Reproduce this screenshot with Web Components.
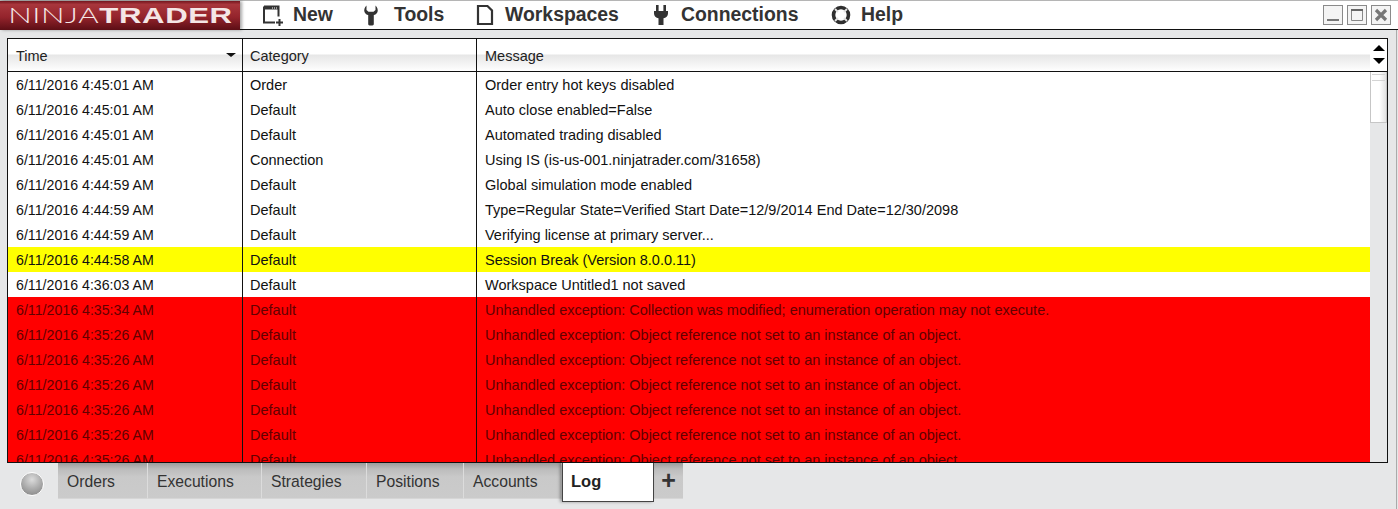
<!DOCTYPE html>
<html>
<head>
<meta charset="utf-8">
<title>NinjaTrader Log</title>
<style>
  html, body { margin: 0; padding: 0; background: #e6e7e8; }
  body { font-family: "Liberation Sans", Arial, sans-serif; overflow: hidden; }
</style>
</head>
<body>
<nt-app></nt-app>
<script>
const ICONS = {
  new: `<svg width="23" height="22" viewBox="0 0 23 22"><path d="M3 2.500h14.500v10M3 2.500v16h11" fill="none" stroke="#333" stroke-width="2"/><path d="M3 3h14v2.500H3z" fill="#333"/><path d="M11 4h1M13 4h1M15 4h1" stroke="#fff"/><path d="M15 18.500h7M18.500 15v7" stroke="#333" stroke-width="2"/></svg>`,
  tools: `<svg width="16" height="22" viewBox="0 0 16 22"><path d="M3.500 1.500C1.500 3.500.8 6 1.500 8c.6 1.600 2 2.700 3.700 3V20c0 1 .8 1.500 2.800 1.500s2.800-.5 2.800-1.500V11c1.700-.3 3.100-1.400 3.700-3 .7-2 0-4.500-2-6.500V6l-2 1.800H5.500L3.500 6z" fill="#333"/></svg>`,
  doc: `<svg width="18" height="22" viewBox="0 0 18 22"><path d="M2 2h9.500L16 6.500V20H2z" fill="none" stroke="#333" stroke-width="2.200"/></svg>`,
  plug: `<svg width="16" height="22" viewBox="0 0 16 22"><path d="M3 1h2.600v6h4.800V1H13v6h2v2.500c0 2.600-2 4.300-4.500 4.800V21h-5v-6.700C3 13.800 1 12.100 1 9.500V7h2z" fill="#333"/></svg>`,
  help: `<svg width="22" height="22" viewBox="0 0 22 22"><circle cx="10" cy="11" r="7.500" fill="none" stroke="#2f2f2f" stroke-width="3.600"/><path d="M4 5l3 3M16 5l-3 3M4 17l3-3M16 17l-3-3" stroke="#e4e4e4" stroke-width="1.800"/></svg>`
};

class NtLogo extends HTMLElement {
  constructor() {
    super();
    this.attachShadow({mode: "open"});
    this.shadowRoot.innerHTML = `
      <style>
        :host {
          display: flex;
          align-items: center;
          justify-content: center;
          width: 240px;
          height: 29px;
          flex: none;
          background: linear-gradient(180deg, #74161e 0%, #a8363c 12%, #95242c 55%, #5c0e15 100%);
          box-shadow: 2px 0 3px rgba(0,0,0,.35);
          overflow: hidden;
        }
        .word {
          display: inline-block;
          white-space: nowrap;
          font-size: 21.500px;
          line-height: 29px;
          transform: scaleX(1.45);
          letter-spacing: .4px;
        }
        .thin { font-family: Lato, "Liberation Sans", sans-serif; font-weight: 300; color: #f6e6e6; }
        .bold { font-family: "Liberation Sans", sans-serif; font-weight: 700; color: #f4e6e6; }
      </style>
      <span class="word"><span class="thin">NINJA</span><span class="bold">TRADER</span></span>`;
  }
}

class NtMenuItem extends HTMLElement {
  constructor() {
    super();
    this.attachShadow({mode: "open"});
  }
  connectedCallback() {
    const gap = this.getAttribute("gap") || "10";
    this.shadowRoot.innerHTML = `
      <style>
        :host {
          display: flex;
          align-items: center;
          font: bold 19.400px "Liberation Sans", Arial, sans-serif;
          color: #333;
          height: 27px;
        }
        .ico { display: flex; margin-right: ${gap}px; }
      </style>
      <span class="ico">${ICONS[this.getAttribute("icon")]}</span><slot></slot>`;
  }
}

class NtWinButton extends HTMLElement {
  constructor() {
    super();
    this.attachShadow({mode: "open"});
  }
  connectedCallback() {
    const kind = this.getAttribute("kind");
    let g = "";
    if (kind === "min") g = `<path d="M3 14h12" stroke="#777" stroke-width="2"/>`;
    if (kind === "max") g = `<path d="M3.500 3.500h11v11h-11z" fill="none" stroke="#888"/><path d="M3 4h12" stroke="#666" stroke-width="2"/>`;
    if (kind === "close") g = `<path d="M4 4l10 10M14 4L4 14" stroke="#777" stroke-width="3.200"/>`;
    this.shadowRoot.innerHTML = `
      <style>
        :host { display: block; width: 18px; height: 18px; border: 1px solid #8a8a8a; background: #f4f4f4; }
        svg { display: block; }
      </style>
      <svg width="18" height="18" viewBox="0 0 18 18">${g}</svg>`;
  }
}

class NtMenubar extends HTMLElement {
  constructor() {
    super();
    this.attachShadow({mode: "open"});
    this.shadowRoot.innerHTML = `
      <style>
        :host {
          display: flex;
          flex: none;
          height: 28px;
          background: #fff;
          border-top: 1px solid #b5b5b5;
          border-bottom: 1px solid #111;
        }
        nt-logo { margin-bottom: -1px; }
        .menu { display: flex; padding-left: 21px; }
        nt-menu-item:nth-of-type(1) { width: 102px; }
        nt-menu-item:nth-of-type(2) { width: 113px; }
        nt-menu-item:nth-of-type(3) { width: 177px; }
        nt-menu-item:nth-of-type(4) { width: 178px; }
        .win { display: flex; gap: 4px; margin-left: auto; padding: 4px 7px 0 0; }
      </style>
      <nt-logo></nt-logo>
      <div class="menu">
        <nt-menu-item icon="new" gap="9">New</nt-menu-item>
        <nt-menu-item icon="tools" gap="15">Tools</nt-menu-item>
        <nt-menu-item icon="doc" gap="11">Workspaces</nt-menu-item>
        <nt-menu-item icon="plug" gap="12">Connections</nt-menu-item>
        <nt-menu-item icon="help" gap="8">Help</nt-menu-item>
      </div>
      <div class="win">
        <nt-win-button kind="min"></nt-win-button>
        <nt-win-button kind="max"></nt-win-button>
        <nt-win-button kind="close"></nt-win-button>
      </div>`;
  }
}

class NtLogRow extends HTMLElement {
  constructor() {
    super();
    this.attachShadow({mode: "open"});
  }
  connectedCallback() {
    this.shadowRoot.innerHTML = `
      <style>
        :host {
          display: grid;
          grid-template-columns: 235px 234px 1fr;
          height: 25px;
          flex: none;
          background: #fff;
          color: #111;
          font: 14.500px/27px "Liberation Sans", Arial, sans-serif;
        }
        :host([level="warn"]) { background: #ffff00; }
        :host([level="error"]) { background: #ff0000; color: #620000; }
        div { white-space: nowrap; overflow: hidden; border-right: 1px solid #111; padding-left: 8px; }
        .time { font-size: 14.200px; }
        .cat { padding-left: 7px; }
        .msg { border-right: 0; }
      </style>
      <div class="time">${this.getAttribute("time")}</div>
      <div class="cat">${this.getAttribute("cat")}</div>
      <div class="msg">${this.getAttribute("msg")}</div>`;
  }
}

class NtGridHeader extends HTMLElement {
  constructor() {
    super();
    this.attachShadow({mode: "open"});
    this.shadowRoot.innerHTML = `
      <style>
        :host {
          display: flex;
          flex: none;
          height: 32px;
          border-bottom: 1px solid #111;
          font: 14.500px "Liberation Sans", Arial, sans-serif;
          color: #222;
        }
        .cols {
          flex: 1;
          display: grid;
          grid-template-columns: 235px 234px 1fr;
          background: linear-gradient(180deg, #fff 0, #fff 15px, #e6e6e6 16px, #fafafa 29px, #fff 32px);
        }
        .cols > div { border-right: 1px solid #111; padding: 9px 0 0 8px; line-height: 17px; position: relative; }
        .cols > .cat { padding-left: 7px; }
        .cols > .msg { border-right: 0; }
        .sort {
          position: absolute;
          right: 6px;
          top: 14px;
          border: 5px solid transparent;
          border-top: 4px solid #111;
          border-bottom: 0;
        }
        .btns {
          width: 17px;
          flex: none;
          background: #fff;
          display: flex;
          flex-direction: column;
          align-items: center;
          padding-top: 6px;
          gap: 7px;
        }
        .up, .down { width: 0; height: 0; border: 6px solid transparent; border-top: 0; border-bottom: 6px solid #000; }
        .down { border-bottom: 0; border-top: 6px solid #000; }
      </style>
      <div class="cols">
        <div>Time<span class="sort"></span></div>
        <div class="cat">Category</div>
        <div class="msg">Message</div>
      </div>
      <div class="btns"><span class="up"></span><span class="down"></span></div>`;
  }
}

class NtScrollbar extends HTMLElement {
  constructor() {
    super();
    this.attachShadow({mode: "open"});
    this.shadowRoot.innerHTML = `
      <style>
        :host { display: block; width: 17px; flex: none; background: #e6e7e8; }
        .thumb {
          height: 51px;
          box-sizing: border-box;
          border: 1px solid #c6c6c6;
          border-top: 0;
          background: linear-gradient(90deg, #fff 0, #fff 55%, #e2e2e2 100%);
          padding: 2px 1px 0;
        }
        i { display: block; height: 1px; background: #d4d4d4; margin-bottom: 5px; }
      </style>
      <div class="thumb"><i></i><i></i></div>`;
  }
}

const E1 = "Unhandled exception: Object reference not set to an instance of an object.";
const LOG = [
  ["6/11/2016 4:45:01 AM", "Order", "Order entry hot keys disabled"],
  ["6/11/2016 4:45:01 AM", "Default", "Auto close enabled=False"],
  ["6/11/2016 4:45:01 AM", "Default", "Automated trading disabled"],
  ["6/11/2016 4:45:01 AM", "Connection", "Using IS (is-us-001.ninjatrader.com/31658)"],
  ["6/11/2016 4:44:59 AM", "Default", "Global simulation mode enabled"],
  ["6/11/2016 4:44:59 AM", "Default", "Type=Regular State=Verified Start Date=12/9/2014 End Date=12/30/2098"],
  ["6/11/2016 4:44:59 AM", "Default", "Verifying license at primary server..."],
  ["6/11/2016 4:44:58 AM", "Default", "Session Break (Version 8.0.0.11)", "warn"],
  ["6/11/2016 4:36:03 AM", "Default", "Workspace Untitled1 not saved"],
  ["6/11/2016 4:35:34 AM", "Default", "Unhandled exception: Collection was modified; enumeration operation may not execute.", "error"],
  ["6/11/2016 4:35:26 AM", "Default", E1, "error"],
  ["6/11/2016 4:35:26 AM", "Default", E1, "error"],
  ["6/11/2016 4:35:26 AM", "Default", E1, "error"],
  ["6/11/2016 4:35:26 AM", "Default", E1, "error"],
  ["6/11/2016 4:35:26 AM", "Default", E1, "error"],
  ["6/11/2016 4:35:26 AM", "Default", E1, "error"]
];

class NtLogGrid extends HTMLElement {
  constructor() {
    super();
    this.attachShadow({mode: "open"});
    const rows = LOG.map(r =>
      `<nt-log-row time="${r[0]}" cat="${r[1]}" msg="${r[2]}" ${r[3] ? `level="${r[3]}"` : ""}></nt-log-row>`
    ).join("");
    this.shadowRoot.innerHTML = `
      <style>
        :host {
          display: flex;
          flex-direction: column;
          flex: none;
          height: 423px;
          margin: 8px 0 0 7px;
          width: 1379px;
          border: 1px solid #111;
          overflow: hidden;
        }
        .body { display: flex; flex: 1; min-height: 0; }
        .rows { flex: 1; display: flex; flex-direction: column; overflow: hidden; }
      </style>
      <nt-grid-header></nt-grid-header>
      <div class="body">
        <div class="rows">${rows}</div>
        <nt-scrollbar></nt-scrollbar>
      </div>`;
  }
}

class NtTab extends HTMLElement {
  constructor() {
    super();
    this.attachShadow({mode: "open"});
    this.shadowRoot.innerHTML = `
      <style>
        :host {
          display: block;
          box-sizing: border-box;
          height: 36px;
          padding-left: 9px;
          font: 15.700px/37px "Liberation Sans", Arial, sans-serif;
          color: #333;
          background: linear-gradient(180deg, #9d9d9d 0, #bcbcbc 6px, #c9c9c9 14px, #cbcbcb 100%);
          border-right: 1px solid #dcdcdc;
          border-bottom: 1px solid #d6d6d6;
        }
        :host([active]) {
          background: #fff;
          border: 1px solid #444;
          border-top: 0;
          font-weight: 700;
          font-size: 16.500px;
          color: #222;
          height: 39px;
          padding-left: 8px;
          box-shadow: -2px 0 3px rgba(0,0,0,.35);
          position: relative;
        }
        :host([add]) {
          padding: 0;
          border-right: 0;
          text-align: center;
          font-weight: 700;
          font-size: 25px;
          line-height: 35px;
        }
      </style>
      <slot></slot>`;
  }
}

class NtTabbar extends HTMLElement {
  constructor() {
    super();
    this.attachShadow({mode: "open"});
    this.shadowRoot.innerHTML = `
      <style>
        :host { display: flex; flex: none; align-items: flex-start; padding-left: 20px; }
        .led {
          width: 24px;
          height: 24px;
          box-sizing: border-box;
          margin: 9px 14px 0 0;
          border-radius: 50%;
          border: 1.500px solid #fff;
          background: radial-gradient(circle at 50% 30%, #dcdcdc 0, #b0b0b0 45%, #909090 80%, #b4b4b4 100%);
        }
        nt-tab:nth-of-type(1) { width: 90px; }
        nt-tab:nth-of-type(2) { width: 114px; }
        nt-tab:nth-of-type(3) { width: 105px; }
        nt-tab:nth-of-type(4) { width: 97px; }
        nt-tab:nth-of-type(5) { width: 98px; }
        nt-tab:nth-of-type(6) { width: 92px; }
        nt-tab:nth-of-type(7) { width: 29px; }
      </style>
      <span class="led"></span>
      <nt-tab>Orders</nt-tab>
      <nt-tab>Executions</nt-tab>
      <nt-tab>Strategies</nt-tab>
      <nt-tab>Positions</nt-tab>
      <nt-tab>Accounts</nt-tab>
      <nt-tab active>Log</nt-tab>
      <nt-tab add>+</nt-tab>`;
  }
}

class NtApp extends HTMLElement {
  constructor() {
    super();
    this.attachShadow({mode: "open"});
    this.shadowRoot.innerHTML = `
      <style>
        :host {
          display: flex;
          flex-direction: column;
          width: 1398px;
          height: 509px;
          overflow: hidden;
          background: #e6e7e8;
          box-sizing: border-box;
        }
        .frame { flex: 1; border-right: 1px solid #aaa; margin-right: 1px; }
      </style>
      <nt-menubar></nt-menubar>
      <div class="frame">
        <nt-log-grid></nt-log-grid>
        <nt-tabbar></nt-tabbar>
      </div>`;
  }
}

customElements.define("nt-logo", NtLogo);
customElements.define("nt-menu-item", NtMenuItem);
customElements.define("nt-win-button", NtWinButton);
customElements.define("nt-menubar", NtMenubar);
customElements.define("nt-log-row", NtLogRow);
customElements.define("nt-grid-header", NtGridHeader);
customElements.define("nt-scrollbar", NtScrollbar);
customElements.define("nt-log-grid", NtLogGrid);
customElements.define("nt-tab", NtTab);
customElements.define("nt-tabbar", NtTabbar);
customElements.define("nt-app", NtApp);
</script>
</body>
</html>
